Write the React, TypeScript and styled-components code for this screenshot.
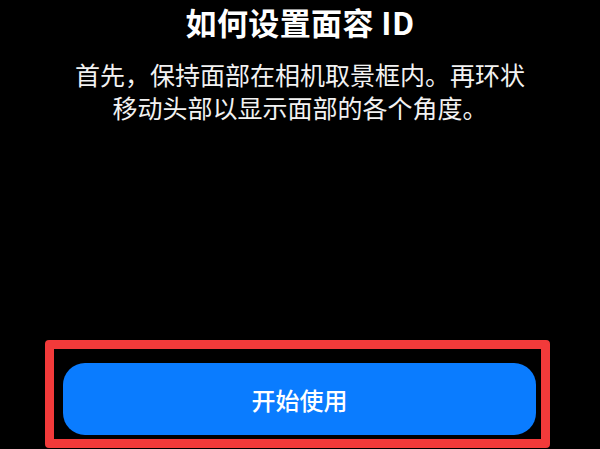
import React, { FC } from 'react';
import styled, { createGlobalStyle } from 'styled-components';

const GlobalStyle = createGlobalStyle`
  html, body {
    margin: 0;
    padding: 0;
    background: #000;
  }
  body {
    font-family: "Noto Sans CJK SC", "Noto Sans", sans-serif;
  }
`;

const Screen = styled.div`
  width: 600px;
  height: 449px;
  display: flex;
  flex-direction: column;
  align-items: center;
  background: #000;
  overflow: hidden;
`;

const Title = styled.h1`
  margin: 2px 0 0;
  font-size: 31px;
  line-height: 40px;
  font-weight: 700;
  color: #fff;
  letter-spacing: 0.4px;
`;

const Description = styled.p`
  margin: 16px 0 0;
  width: 470px;
  font-size: 25px;
  line-height: 33px;
  font-weight: 400;
  color: #f2f2f2;
  text-align: center;
`;

const Spacer = styled.div`
  flex: 1;
`;

const Highlight = styled.div`
  align-self: flex-start;
  margin: 0 0 1px 45px;
  width: 505px;
  height: 108px;
  box-sizing: border-box;
  border: 9px solid #f23a3a;
  border-radius: 4px;
  padding: 14px 5px 4px 9px;
  display: flex;
`;

const PrimaryButton = styled.button`
  flex: 1;
  border: none;
  border-radius: 22px;
  background: #0a7cff;
  color: #fff;
  font-family: "Noto Sans CJK SC", "Noto Sans", sans-serif;
  font-size: 24px;
  font-weight: 500;
  cursor: pointer;
`;

const App: FC = () => (
  <>
    <GlobalStyle />
    <Screen>
      <Title>如何设置面容 ID</Title>
      <Description>
        首先，保持面部在相机取景框内。再环状移动头部以显示面部的各个角度。
      </Description>
      <Spacer />
      <Highlight>
        <PrimaryButton>开始使用</PrimaryButton>
      </Highlight>
    </Screen>
  </>
);

export default App;
